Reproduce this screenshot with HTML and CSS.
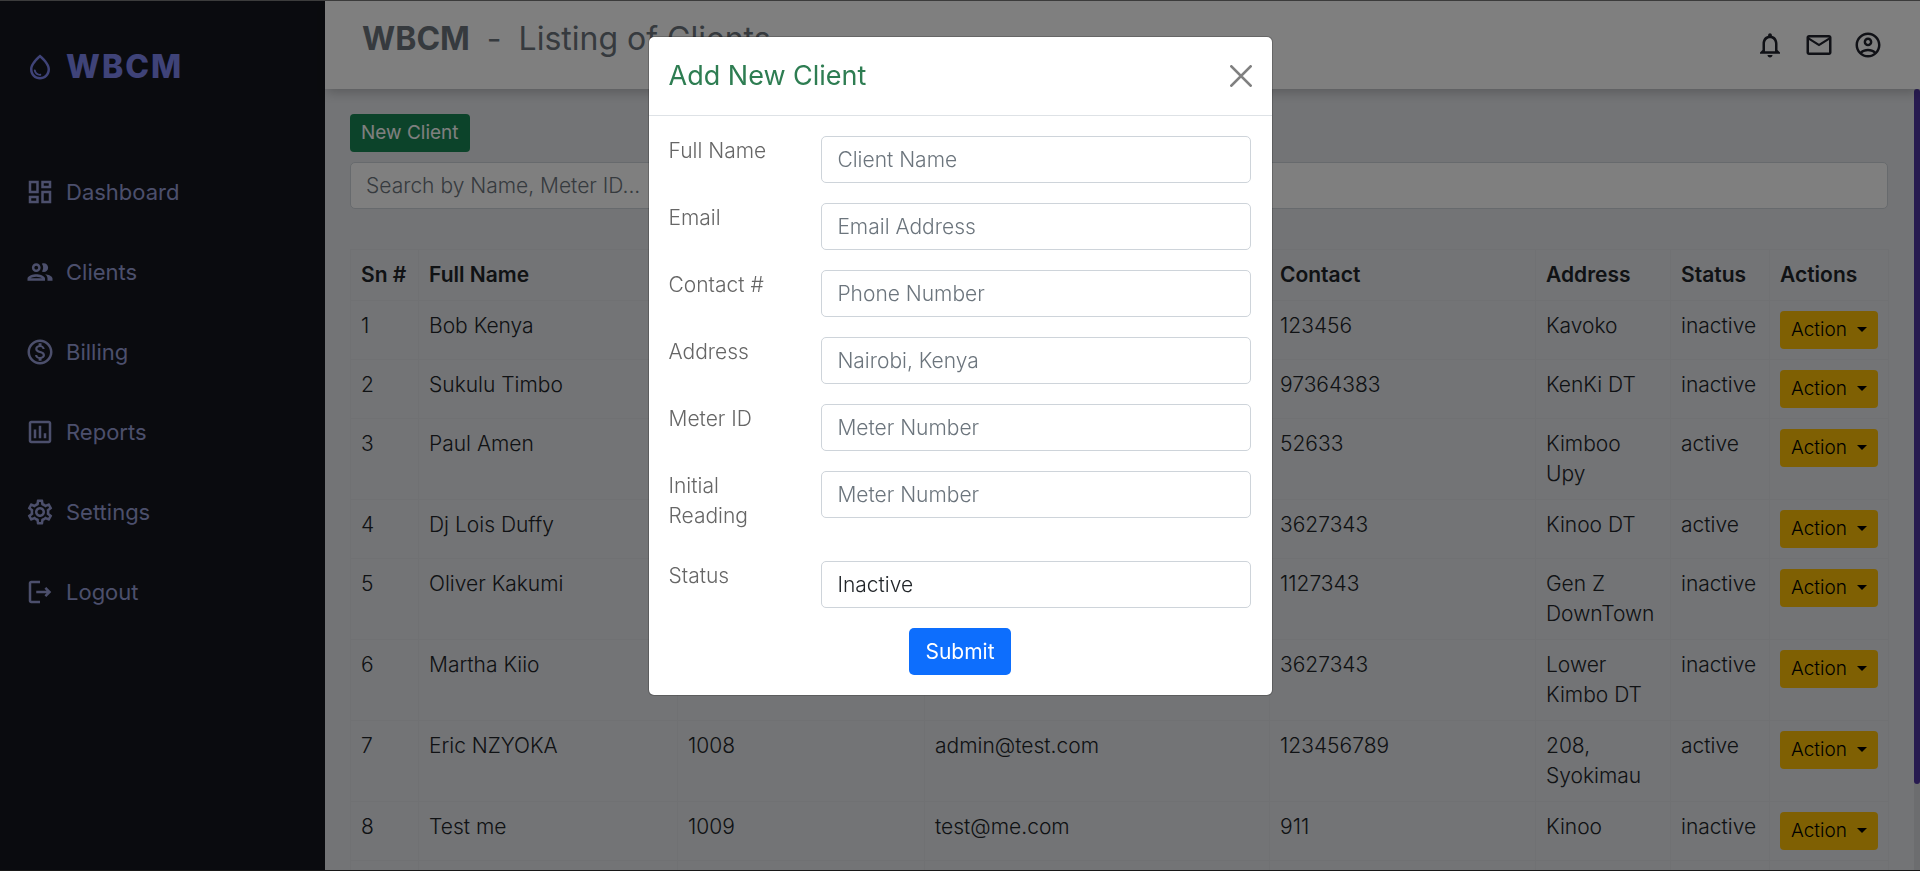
FILE: index.html
```
<!DOCTYPE html>
<html lang="en">
<head>
<meta charset="utf-8">
<title>WBCM - Listing of Clients</title>
<link rel="stylesheet" href="styles.css">
</head>
<body>
<div class="app">
  <aside class="sidebar">
    <div class="brand">
      <svg class="icon" viewBox="0 0 24 24"><path d="M12 2c-5.33 4.55-8 8.48-8 11.8 0 4.98 3.8 8.2 8 8.2s8-3.22 8-8.200c0-3.320-2.670-7.250-8-11.800zm0 18c-3.350 0-6-2.570-6-6.200 0-2.340 1.950-5.440 6-9.140 4.050 3.700 6 6.790 6 9.140 0 3.630-2.650 6.200-6 6.200zm-4.170-6c.37 0 .67.260.74.620.41 2.220 2.280 2.980 3.640 2.870.43-.02.79.320.79.750 0 .4-.32.730-.72.750-2.130.130-4.620-1.090-5.190-4.120-.08-.45.28-.87.740-.87z"/></svg>
      <span>WBCM</span>
    </div>
    <nav class="menu">
      <a href="#" class="menu-link"><svg class="icon" viewBox="0 0 24 24"><path d="M19 5v2h-4V5h4M9 5v6H5V5h4m10 8v6h-4v-6h4M9 17v2H5v-2h4M21 3h-8v6h8V3zM11 3H3v10h8V3zm10 8h-8v10h8V11zm-10 4H3v6h8v-6z"/></svg>Dashboard</a>
      <a href="#" class="menu-link"><svg class="icon" viewBox="0 0 24 24"><path d="M9 13.750c-2.340 0-7 1.170-7 3.500V19h14v-1.750c0-2.330-4.660-3.500-7-3.500zM4.340 17c.84-.58 2.870-1.250 4.660-1.250s3.820.67 4.660 1.250H4.340zM9 12c1.930 0 3.500-1.570 3.500-3.500S10.930 5 9 5 5.500 6.570 5.500 8.500 7.070 12 9 12zm0-5c.83 0 1.500.67 1.500 1.500S9.830 10 9 10s-1.500-.67-1.500-1.500S8.170 7 9 7zm7.040 6.810c1.160.84 1.960 1.960 1.960 3.440V19h4v-1.750c0-2.020-3.500-3.170-5.960-3.440zM15 12c1.930 0 3.500-1.570 3.500-3.500S16.930 5 15 5c-.54 0-1.040.130-1.500.350.63.89 1 1.980 1 3.150s-.37 2.260-1 3.150c.46.220.96.350 1.500.350z"/></svg>Clients</a>
      <a href="#" class="menu-link"><svg class="icon" viewBox="0 0 24 24"><path d="M12 2C6.480 2 2 6.480 2 12s4.480 10 10 10 10-4.480 10-10S17.520 2 12 2zm0 18c-4.410 0-8-3.590-8-8s3.590-8 8-8 8 3.590 8 8-3.590 8-8 8zm.31-8.860c-1.770-.45-2.340-.94-2.340-1.670 0-.84.790-1.430 2.100-1.430 1.380 0 1.900.66 1.940 1.640h1.710c-.05-1.340-.87-2.570-2.490-2.970V5H10.900v1.690c-1.510.320-2.720 1.300-2.720 2.810 0 1.790 1.490 2.690 3.660 3.210 1.950.46 2.340 1.150 2.340 1.870 0 .53-.39 1.390-2.100 1.390-1.600 0-2.230-.72-2.320-1.640H8.040c.1 1.700 1.360 2.660 2.860 2.970V19h2.340v-1.670c1.520-.29 2.720-1.160 2.730-2.770-.01-2.200-1.900-2.960-3.660-3.420z"/></svg>Billing</a>
      <a href="#" class="menu-link"><svg class="icon" viewBox="0 0 24 24"><path d="M19 3H5c-1.100 0-2 .9-2 2v14c0 1.100.9 2 2 2h14c1.100 0 2-.9 2-2V5c0-1.100-.9-2-2-2zm0 16H5V5h14v14zM7 10h2v7H7zm4-3h2v10h-2zm4 6h2v4h-2z"/></svg>Reports</a>
      <a href="#" class="menu-link"><svg class="icon" viewBox="0 0 24 24"><path d="M19.430 12.980c.04-.32.070-.64.070-.98s-.03-.66-.07-.98l2.110-1.650c.19-.15.240-.42.120-.64l-2-3.460c-.09-.16-.26-.25-.44-.25-.06 0-.12.010-.17.030l-2.490 1c-.52-.4-1.080-.73-1.690-.98l-.38-2.650C14.460 2.180 14.250 2 14 2h-4c-.25 0-.46.180-.49.420l-.38 2.650c-.61.250-1.170.590-1.690.980l-2.490-1c-.06-.02-.12-.03-.18-.03-.17 0-.34.090-.43.250l-2 3.460c-.13.220-.07.490.12.640l2.110 1.650c-.04.320-.07.650-.07.980s.03.660.07.980l-2.110 1.650c-.19.150-.24.420-.12.640l2 3.460c.09.160.26.250.44.250.06 0 .12-.01.170-.03l2.490-1c.52.400 1.080.730 1.690.980l.38 2.650c.03.240.24.420.49.420h4c.25 0 .46-.18.490-.42l.38-2.650c.61-.25 1.170-.59 1.690-.98l2.490 1c.06.020.12.030.18.030.17 0 .34-.09.430-.25l2-3.460c.12-.22.070-.49-.12-.64l-2.110-1.650zm-1.980-1.710c.04.310.05.520.05.730s-.02.430-.05.730l-.14 1.130.89.700 1.080.84-.7 1.210-1.270-.51-1.040-.42-.9.680c-.43.320-.84.560-1.250.730l-1.060.430-.16 1.130-.2 1.350h-1.400l-.19-1.350-.16-1.130-1.060-.43c-.43-.18-.83-.41-1.230-.71l-.91-.7-1.060.43-1.270.51-.7-1.210 1.080-.84.890-.7-.14-1.130c-.03-.31-.05-.54-.05-.74s.02-.43.050-.73l.14-1.130-.89-.7-1.080-.84.7-1.210 1.270.51 1.040.42.900-.68c.43-.32.840-.56 1.250-.73l1.060-.43.160-1.130.2-1.350h1.390l.19 1.350.16 1.130 1.060.430c.43.180.83.410 1.230.710l.91.700 1.060-.43 1.270-.51.700 1.210-1.070.85-.89.700.14 1.130zM12 8c-2.210 0-4 1.790-4 4s1.790 4 4 4 4-1.790 4-4-1.790-4-4-4zm0 6c-1.100 0-2-.9-2-2s.9-2 2-2 2 .9 2 2-.9 2-2 2z"/></svg>Settings</a>
      <a href="#" class="menu-link"><svg class="icon" viewBox="0 0 24 24"><path d="M5 5h7V3H5c-1.100 0-2 .9-2 2v14c0 1.100.9 2 2 2h7v-2H5V5zm16 7-4-4-1.400 1.400 1.600 1.600H9v2h8.200l-1.600 1.600L17 16l4-4z"/></svg>Logout</a>
    </nav>
  </aside>

  <div class="content">
    <header class="topbar">
      <h1 class="page-title"><strong>WBCM</strong><span>-</span><span>Listing of Clients</span></h1>
      <div class="topbar-actions">
        <button type="button" class="icon-button" aria-label="Notifications"><svg class="icon" viewBox="0 0 24 24"><path d="M12 22c1.100 0 2-.9 2-2h-4c0 1.100.9 2 2 2zm6-6v-5c0-3.070-1.630-5.640-4.500-6.320V4c0-.83-.67-1.500-1.500-1.500s-1.500.67-1.500 1.500v.68C7.640 5.360 6 7.920 6 11v5l-2 2v1h16v-1l-2-2zm-2 1H8v-6c0-2.480 1.510-4.500 4-4.500s4 2.020 4 4.500v6z"/></svg></button>
        <button type="button" class="icon-button" aria-label="Messages"><svg class="icon" viewBox="0 0 24 24"><path d="M20 4H4c-1.100 0-2 .9-2 2v12c0 1.100.9 2 2 2h16c1.100 0 2-.9 2-2V6c0-1.100-.9-2-2-2zm0 14H4V8l8 5 8-5v10zm-8-7L4 6h16l-8 5z"/></svg></button>
        <button type="button" class="icon-button" aria-label="Account"><svg class="icon" viewBox="0 0 24 24"><path d="M12 2C6.480 2 2 6.480 2 12s4.480 10 10 10 10-4.480 10-10S17.520 2 12 2zM7.350 18.500C8.660 17.560 10.260 17 12 17s3.340.56 4.650 1.500C15.340 19.440 13.740 20 12 20s-3.340-.56-4.650-1.500zm10.790-1.380C16.450 15.800 14.320 15 12 15s-4.450.8-6.140 2.120C4.700 15.730 4 13.950 4 12c0-4.420 3.580-8 8-8s8 3.580 8 8c0 1.950-.7 3.730-1.860 5.120zM12 6c-1.930 0-3.500 1.570-3.500 3.500S10.070 13 12 13s3.500-1.570 3.500-3.500S13.930 6 12 6zm0 5c-.83 0-1.500-.67-1.500-1.500S11.170 8 12 8s1.500.67 1.500 1.500S12.830 11 12 11z"/></svg></button>
      </div>
    </header>

    <main class="main">
      <button type="button" class="btn btn-small btn-success">New Client</button>
      <input type="search" class="field" placeholder="Search by Name, Meter ID..." aria-label="Search clients">
      <table class="clients">
        <colgroup><col class="c-sn"><col class="c-name"><col class="c-meter"><col class="c-email"><col class="c-contact"><col class="c-address"><col class="c-status"><col class="c-actions"></colgroup>
        <thead>
          <tr><th>Sn #</th><th>Full Name</th><th></th><th></th><th>Contact</th><th>Address</th><th>Status</th><th>Actions</th></tr>
        </thead>
        <tbody>
          <tr><td>1</td><td>Bob Kenya</td><td></td><td></td><td>123456</td><td>Kavoko</td><td>inactive</td><td><button type="button" class="btn btn-small btn-warning">Action</button></td></tr>
          <tr><td>2</td><td>Sukulu Timbo</td><td></td><td></td><td>97364383</td><td>KenKi DT</td><td>inactive</td><td><button type="button" class="btn btn-small btn-warning">Action</button></td></tr>
          <tr><td>3</td><td>Paul Amen</td><td></td><td></td><td>52633</td><td>Kimboo<br>Upy</td><td>active</td><td><button type="button" class="btn btn-small btn-warning">Action</button></td></tr>
          <tr><td>4</td><td>Dj Lois Duffy</td><td></td><td></td><td>3627343</td><td>Kinoo DT</td><td>active</td><td><button type="button" class="btn btn-small btn-warning">Action</button></td></tr>
          <tr><td>5</td><td>Oliver Kakumi</td><td></td><td></td><td>1127343</td><td>Gen Z<br>DownTown</td><td>inactive</td><td><button type="button" class="btn btn-small btn-warning">Action</button></td></tr>
          <tr><td>6</td><td>Martha Kiio</td><td></td><td></td><td>3627343</td><td>Lower<br>Kimbo DT</td><td>inactive</td><td><button type="button" class="btn btn-small btn-warning">Action</button></td></tr>
          <tr><td>7</td><td>Eric NZYOKA</td><td>1008</td><td>admin@test.com</td><td>123456789</td><td>208,<br>Syokimau</td><td>active</td><td><button type="button" class="btn btn-small btn-warning">Action</button></td></tr>
          <tr><td>8</td><td>Test me</td><td>1009</td><td>test@me.com</td><td>911</td><td>Kinoo</td><td>inactive</td><td><button type="button" class="btn btn-small btn-warning">Action</button></td></tr>
          <tr><td></td><td></td><td></td><td></td><td></td><td></td><td></td><td></td></tr>
        </tbody>
      </table>
      <div class="scroll-track"><div class="scroll-thumb"></div></div>
    </main>
  </div>
</div>

<div class="backdrop">
  <section class="modal" role="dialog" aria-modal="true" aria-labelledby="modal-title">
    <header class="modal-header">
      <h2 class="modal-title" id="modal-title">Add New Client</h2>
      <button type="button" class="close" aria-label="Close"><svg class="close-icon" viewBox="0 0 16 16"><path d="M1 1l14 14M15 1L1 15"/></svg></button>
    </header>
    <form class="modal-body">
      <div class="form-row"><label for="name">Full Name</label><input class="field" id="name" type="text" placeholder="Client Name"></div>
      <div class="form-row"><label for="email">Email</label><input class="field" id="email" type="email" placeholder="Email Address"></div>
      <div class="form-row"><label for="contact">Contact #</label><input class="field" id="contact" type="tel" placeholder="Phone Number"></div>
      <div class="form-row"><label for="address">Address</label><input class="field" id="address" type="text" placeholder="Nairobi, Kenya"></div>
      <div class="form-row"><label for="meter">Meter ID</label><input class="field" id="meter" type="text" placeholder="Meter Number"></div>
      <div class="form-row"><label for="reading">Initial<br>Reading</label><input class="field" id="reading" type="text" placeholder="Meter Number"></div>
      <div class="form-row"><label for="status">Status</label><select class="field" id="status"><option>Inactive</option><option>Active</option></select></div>
      <button type="submit" class="btn btn-primary">Submit</button>
    </form>
  </section>
</div>
</body>
</html>
```
FILE: styles.css
```
* { box-sizing: border-box; }

body {
  margin: 0;
  font-family: Inter, "Open Sans", sans-serif;
  font-size: 21px;
  font-weight: 300;
  line-height: 30px;
  color: #212529;
  overflow: hidden;
}

button, input, select { font: inherit; }

.app {
  display: flex;
  height: 100vh;
  border-top: 1px solid #787878;
  border-bottom: 1px solid #303030;
  background: #e6e8ec;
}

.sidebar {
  width: 325px;
  flex: none;
  padding: 45px 25px;
  background: #15171e;
}

.icon {
  width: 30px;
  height: 30px;
  flex: none;
  fill: currentColor;
  display: block;
}

.brand {
  display: flex;
  align-items: center;
  gap: 11px;
  height: 42px;
  color: #7f87f0;
  font-size: 32px;
  font-weight: 800;
  letter-spacing: 2px;
}

.menu {
  display: flex;
  flex-direction: column;
  gap: 50px;
  margin-top: 89px;
}

.menu-link {
  display: flex;
  align-items: center;
  gap: 11px;
  color: #989fd8;
  font-size: 22px;
  font-weight: 400;
  text-decoration: none;
}

.content {
  flex: 1;
  min-width: 0;
  display: flex;
  flex-direction: column;
}

.topbar {
  display: flex;
  justify-content: space-between;
  flex: none;
  height: 88px;
  padding: 18px 37px;
  background: #fff;
  box-shadow: 0 6px 10px -2px rgba(0, 0, 0, 0.2);
  z-index: 1;
}

.page-title {
  display: flex;
  gap: 17px;
  margin: 0;
  color: #6c757d;
  font-size: 32px;
  font-weight: 400;
  line-height: 40px;
}

.page-title strong { font-weight: 700; }

.topbar-actions {
  display: flex;
  align-items: center;
  gap: 19px;
}

.icon-button {
  padding: 0;
  border: 0;
  background: none;
  color: #21232d;
}

.main {
  position: relative;
  flex: 1;
  min-height: 0;
  padding: 25px 32px 0 25px;
  overflow: hidden;
}

.btn {
  display: block;
  height: 47px;
  padding: 0 16px;
  border: 0;
  border-radius: 5px;
  font-weight: 400;
}

.btn-small {
  height: 38px;
  padding: 0 11px;
  border-radius: 4px;
  font-size: 19px;
}

.btn-success { background: #198754; color: #fff; }

.btn-warning {
  display: flex;
  align-items: center;
  justify-content: space-between;
  width: 98px;
  background: #ffc107;
  color: #000;
  font-weight: 300;
}

.btn-warning::after {
  content: "";
  margin-bottom: 2px;
  border: 5px solid transparent;
  border-top-color: currentColor;
  border-bottom: 0;
}

.btn-primary {
  margin: 0 auto;
  background: #0d6efd;
  color: #fff;
}

.field {
  display: block;
  width: 100%;
  height: 47px;
  padding: 7px 15px;
  border: 1px solid #ced4da;
  border-radius: 5px;
  background: #fff;
  color: #212529;
  appearance: none;
}

.field::placeholder { color: #6c757d; opacity: 1; }

.main > .field { margin-top: 10px; }

.clients {
  width: 100%;
  margin-top: 40px;
  border-collapse: collapse;
  table-layout: fixed;
}

.clients th, .clients td {
  padding: 10px;
  border: 1px solid #e0e2e7;
  text-align: left;
  vertical-align: top;
}

.clients th { font-weight: 600; }

.c-sn { width: 68px; }
.c-name { width: 259px; }
.c-meter { width: 247px; }
.c-email { width: 345px; }
.c-contact { width: 266px; }
.c-address { width: 135px; }
.c-status { width: 99px; }
.c-actions { width: 119px; }

.scroll-track {
  position: absolute;
  top: 0;
  right: 0;
  bottom: 0;
  width: 6px;
  background: #d8dade;
}

.scroll-thumb {
  height: 89%;
  border-radius: 3px;
  background: #4f35a1;
}

.backdrop {
  position: fixed;
  inset: 0;
  z-index: 2;
  padding: 36px 0;
  background: rgba(0, 0, 0, 0.5);
}

.modal {
  width: 625px;
  margin: 0 auto;
  border: 1px solid rgba(0, 0, 0, 0.2);
  border-radius: 6px;
  background: #fff;
  background-clip: padding-box;
}

.modal-header {
  display: flex;
  align-items: center;
  justify-content: space-between;
  padding: 19px 20px;
  border-bottom: 1px solid #dee2e6;
}

.modal-title {
  margin: 0;
  color: #2e7d52;
  font-size: 27px;
  font-weight: 400;
  line-height: 40px;
}

.close {
  padding: 0;
  border: 0;
  background: none;
}

.close-icon {
  display: block;
  width: 22px;
  height: 22px;
  fill: none;
  stroke: #808080;
  stroke-width: 2;
  stroke-linecap: round;
}

.modal-body { padding: 20px; }

.form-row {
  display: grid;
  grid-template-columns: minmax(0, 2fr) minmax(0, 7fr);
  gap: 30px;
  align-items: start;
  margin-bottom: 20px;
}

.form-row label {
  margin-bottom: 10px;
  color: #666;
}
```
